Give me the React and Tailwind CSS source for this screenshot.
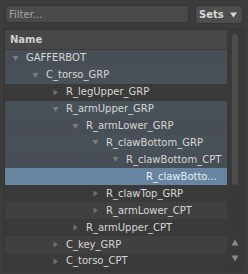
const rows = [
  { name: "GAFFERBOT", depth: 0, arrow: "down", path: true },
  { name: "C_torso_GRP", depth: 1, arrow: "down", path: true },
  { name: "R_legUpper_GRP", depth: 2, arrow: "right" },
  { name: "R_armUpper_GRP", depth: 2, arrow: "down", path: true },
  { name: "R_armLower_GRP", depth: 3, arrow: "down", path: true },
  { name: "R_clawBottom_GRP", depth: 4, arrow: "down", path: true },
  { name: "R_clawBottom_CPT", depth: 5, arrow: "down", path: true },
  { name: "R_clawBotto...", depth: 6, arrow: null, selected: true },
  { name: "R_clawTop_GRP", depth: 4, arrow: "right" },
  { name: "R_armLower_CPT", depth: 4, arrow: "right" },
  { name: "R_armUpper_CPT", depth: 3, arrow: "right" },
  { name: "C_key_GRP", depth: 2, arrow: "right" },
  { name: "C_torso_CPT", depth: 2, arrow: "right" },
];

const Arrow = ({ dir }) => {
  if (dir === "down") {
    return (
      <svg width="7" height="7" viewBox="0 0 7 7">
        <polygon points="0.5,1 6.5,1 3.5,6" fill="#7c7c7c" />
      </svg>
    );
  }
  return (
    <svg width="7" height="7" viewBox="0 0 7 7">
      <polygon points="1.5,0.5 6,3.5 1.5,6.5" fill="#6e6e6e" />
    </svg>
  );
};

const rowBg = (row, idx) => {
  if (row.selected) return "bg-[#6784a1] text-[#e8edf2]";
  if (row.path) return idx % 2 ? "bg-[#495158]" : "bg-[#474e55]";
  return idx % 2 ? "bg-[#404040]" : "bg-[#3a3a3a]";
};

export default function App() {
  return (
    <div className="w-[248px] h-[274px] bg-[#3c3c3c] text-[10px] text-[#d6d6d6] font-['DejaVu_Sans',sans-serif] overflow-hidden">
      <div className="flex gap-[6px] px-[5px] pt-[5px]">
        <div className="flex-1 h-[18px] rounded-[3px] bg-[#4a4a4a] border border-[#343434] flex items-center pl-[3px] text-[#a8a8a8]">
          Filter...
        </div>
        <div className="w-[48px] h-[19px] rounded-[4px] bg-[#4e4e4e] border border-[#353535] flex items-center pl-[3px] gap-[6px] font-bold text-[#d8d8d8]">
          <span>Sets</span>
          <svg width="7" height="6" viewBox="0 0 7 6">
            <polygon points="0,0.5 7,0.5 3.5,5.5" fill="#d8d8d8" />
          </svg>
        </div>
      </div>
      <div className="mx-[4px] mt-[5px] h-[242px] border border-[#333333] bg-[#393939] flex">
        <div className="w-[222px] flex flex-col">
          <div className="h-[20px] bg-[#474747] flex items-center pl-[5px] font-bold text-[#cfcfcf] border-b border-[#3a3a3a]">
            Name
          </div>
          {rows.map((row, idx) => (
            <div key={idx} className={`h-[17px] flex items-center ${rowBg(row, idx)}`}>
              <div className="flex items-center" style={{ paddingLeft: 7 + row.depth * 20 }}>
                <div className="w-[14px] flex items-center">
                  {row.arrow && <Arrow dir={row.arrow} />}
                </div>
                <span className="leading-none">{row.name}</span>
              </div>
            </div>
          ))}
        </div>
        <div className="flex-1 flex flex-col items-center pt-[3px] pb-[4px]">
          <div className="w-[8px] h-[153px] rounded-[4px] bg-[#4c4c4c] border border-[#3a3a3a]" />
          <div className="flex-1" />
          <svg width="8" height="7" viewBox="0 0 8 7" className="mb-[9px]">
            <polygon points="4,0.5 7.5,6.5 0.5,6.5" fill="#8a8a8a" />
          </svg>
          <svg width="8" height="7" viewBox="0 0 8 7" className="mb-[4px]">
            <polygon points="0.5,0.5 7.5,0.5 4,6.5" fill="#8a8a8a" />
          </svg>
        </div>
      </div>
    </div>
  );
}
